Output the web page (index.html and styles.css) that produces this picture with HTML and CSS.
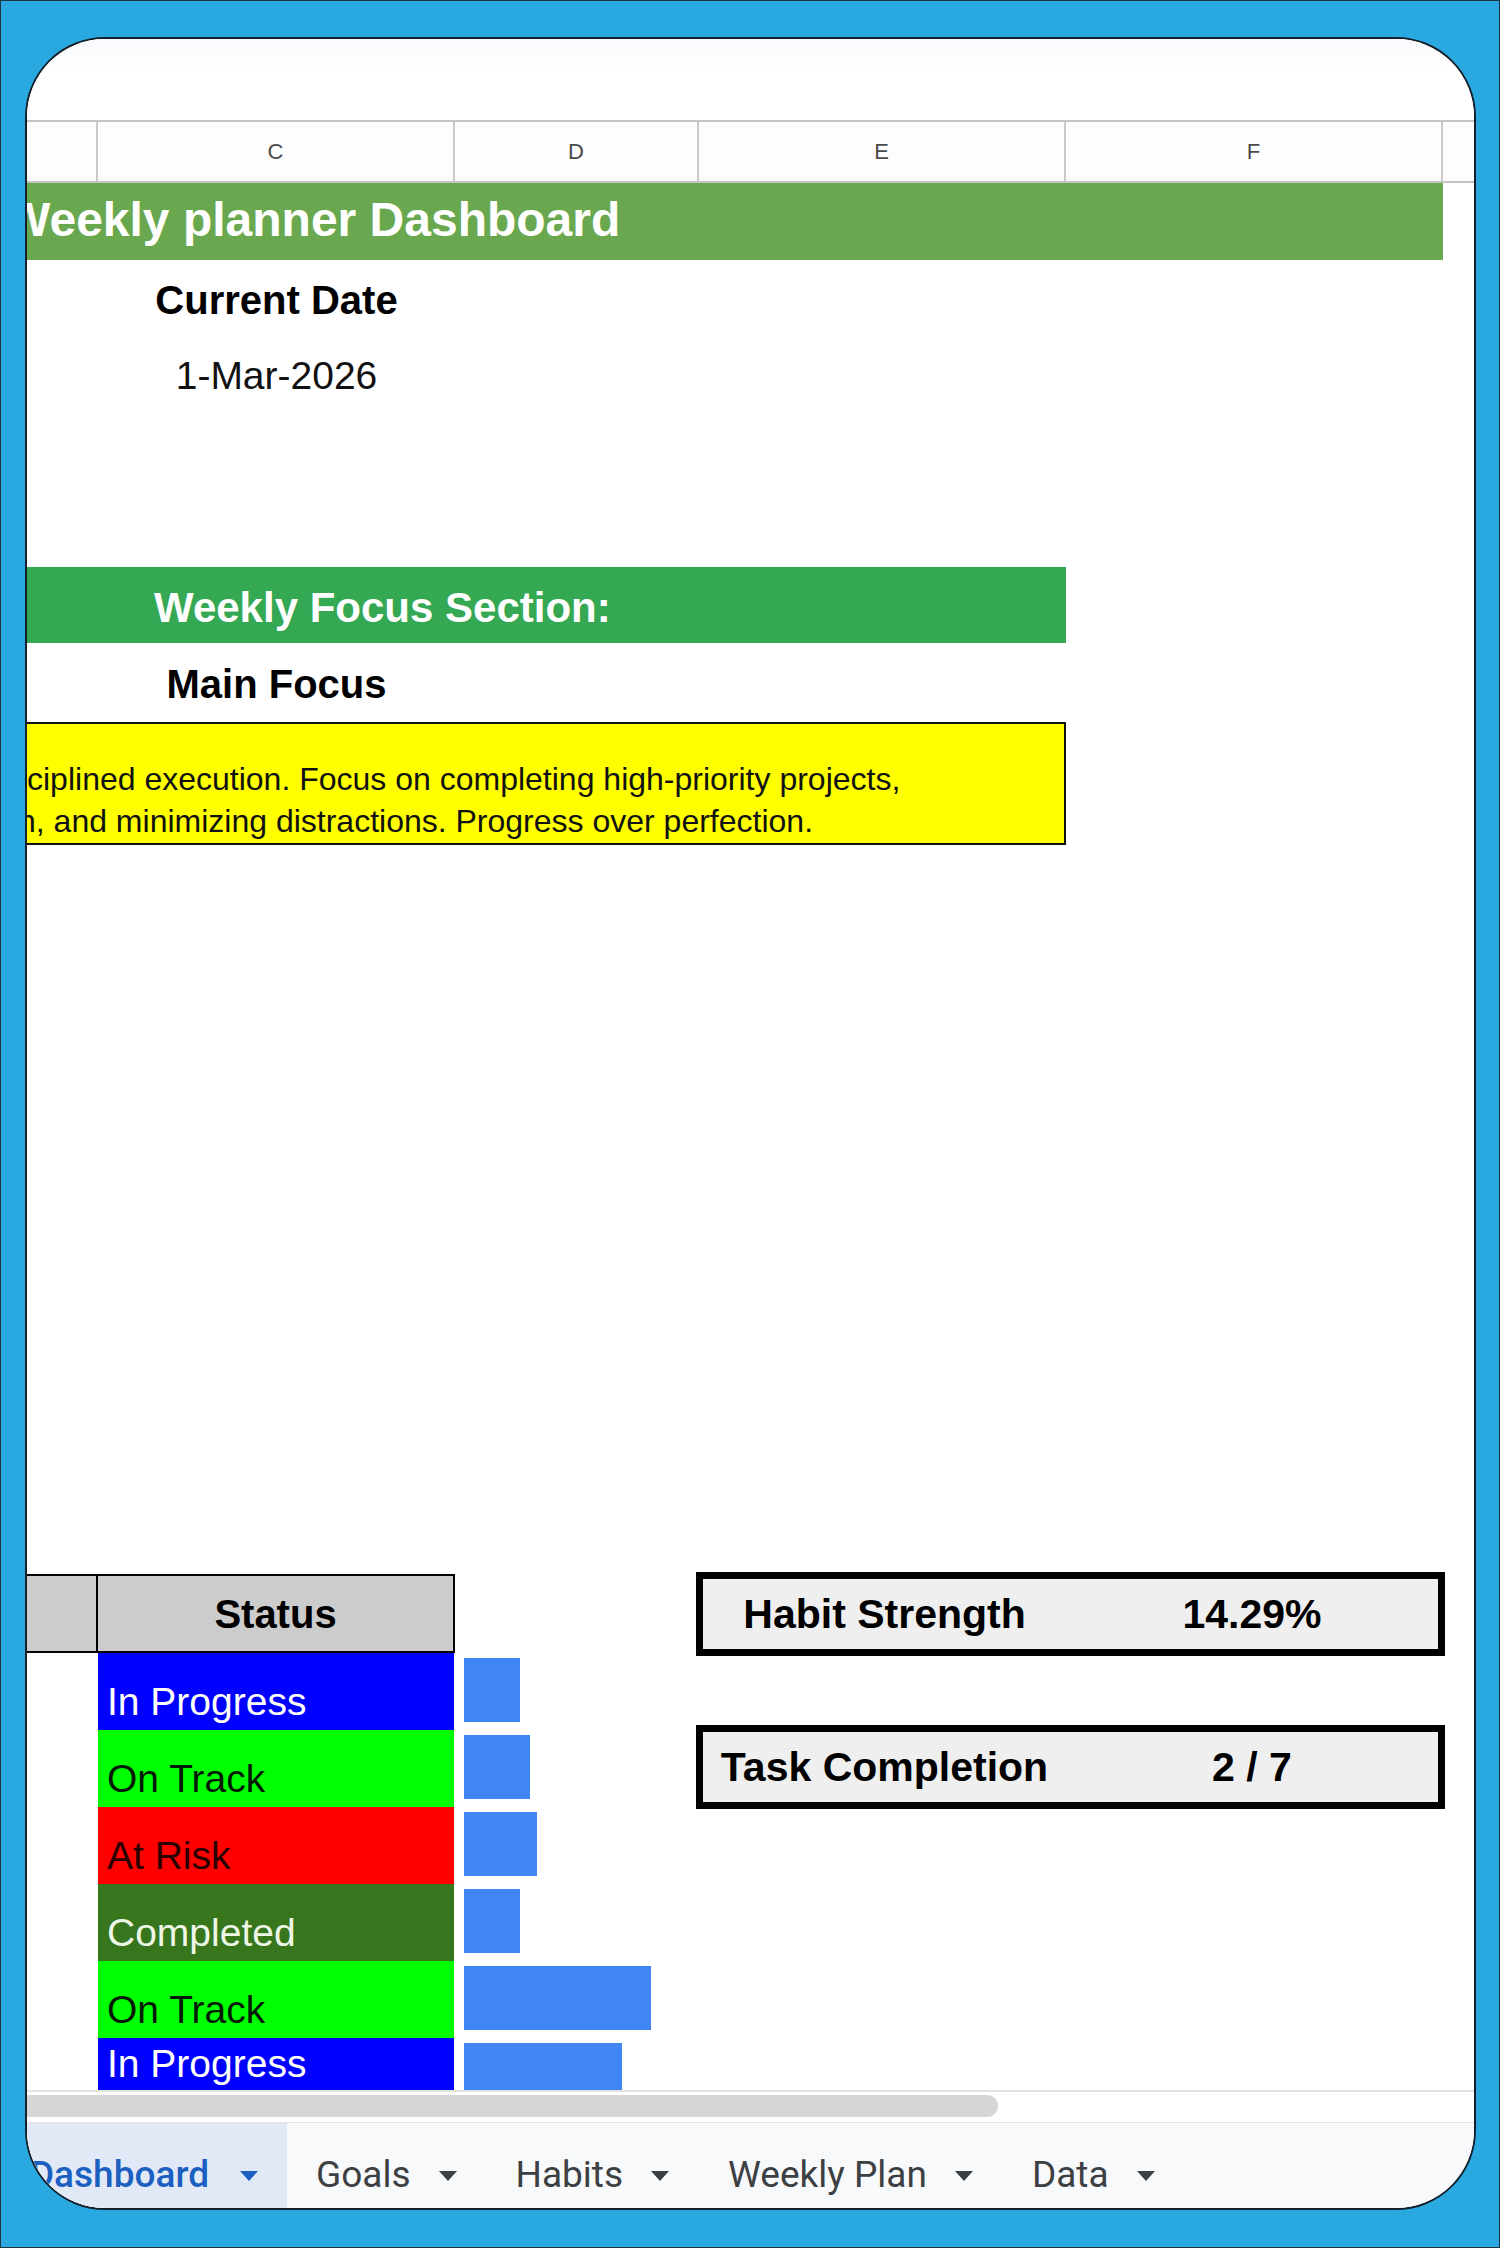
FILE: index.html
```html
<!DOCTYPE html>
<html lang="en">
<head>
<meta charset="utf-8">
<title>Weekly planner Dashboard</title>
<link rel="stylesheet" href="styles.css">
</head>
<body>
<div class="frame">
  <div class="card">
    <div class="top-space"></div>
    <div class="col-headers">
      <div class="ch"></div>
      <div class="ch">C</div>
      <div class="ch">D</div>
      <div class="ch">E</div>
      <div class="ch">F</div>
      <div class="ch last"></div>
    </div>
    <div class="sheet">
      <div class="row r-title">
        <div class="title-bar"><span class="title-text">Weekly planner Dashboard</span></div>
      </div>
      <div class="row r-std">
        <div class="cell-c bold">Current Date</div>
      </div>
      <div class="row r-std">
        <div class="cell-c">1-Mar-2026</div>
      </div>
      <div class="spacer-a"></div>
      <div class="row r-focus">
        <div class="focus-bar">Weekly Focus Section:</div>
      </div>
      <div class="row r-main">
        <div class="cell-c bold">Main Focus</div>
      </div>
      <div class="row r-yellow">
        <div class="yellow-box">
          <span class="yl">ciplined execution. Focus on completing high-priority projects,</span>
          <span class="yl yl2">n, and minimizing distractions. Progress over perfection.</span>
        </div>
      </div>
      <div class="spacer-b"></div>
      <div class="status-grid">
        <div class="st-head st-b"></div>
        <div class="st-head st-c">Status</div>
        <div class="metrics">
          <div class="metric">
            <span class="m-label">Habit Strength</span>
            <span class="m-value">14.29%</span>
          </div>
          <div class="metric">
            <span class="m-label">Task Completion</span>
            <span class="m-value">2 / 7</span>
          </div>
        </div>
        <div class="st-cell s-blue">In Progress</div>
        <div class="bar-cell"><span class="bar" style="width:56px"></span></div>
        <div class="st-cell s-green">On Track</div>
        <div class="bar-cell"><span class="bar" style="width:66px"></span></div>
        <div class="st-cell s-red">At Risk</div>
        <div class="bar-cell"><span class="bar" style="width:73px"></span></div>
        <div class="st-cell s-done">Completed</div>
        <div class="bar-cell"><span class="bar" style="width:56px"></span></div>
        <div class="st-cell s-green">On Track</div>
        <div class="bar-cell"><span class="bar" style="width:187px"></span></div>
        <div class="st-cell s-blue">In Progress</div>
        <div class="bar-cell"><span class="bar" style="width:158px"></span></div>
      </div>
    </div>
    <div class="scroll-area"><div class="thumb"></div></div>
    <div class="tabs">
      <div class="tab active"><span class="tab-text">Dashboard</span><span class="tri"></span></div>
      <div class="tab"><span class="tab-text">Goals</span><span class="tri"></span></div>
      <div class="tab"><span class="tab-text">Habits</span><span class="tri"></span></div>
      <div class="tab"><span class="tab-text">Weekly Plan</span><span class="tri"></span></div>
      <div class="tab"><span class="tab-text">Data</span><span class="tri"></span></div>
    </div>
  </div>
</div>
</body>
</html>
```
FILE: styles.css
```css
* { box-sizing: border-box; }

html, body {
  margin: 0;
  padding: 0;
}

body {
  width: 1500px;
  height: 2248px;
  background: #29a9e0;
  font-family: "Liberation Sans", Arial, sans-serif;
  color: #000;
}

.frame {
  width: 1500px;
  height: 2248px;
  border: 1px solid #1d3444;
  padding: 36px 0 0 24px;
}

.card {
  --cols: 71px 357px 244px 367px 377px 1fr;
  width: 1451px;
  height: 2173px;
  background: #ffffff;
  border: 2px solid #14202b;
  border-radius: 80px;
  overflow: hidden;
  display: flex;
  flex-direction: column;
}

.top-space {
  height: 81px;
  flex: none;
  background: linear-gradient(#f9fafd, #ffffff 30px);
}

/* column letters */
.col-headers {
  flex: none;
  height: 63px;
  display: grid;
  grid-template-columns: var(--cols);
  border-top: 2px solid #c4c4c4;
  border-bottom: 2px solid #c4c4c4;
  background: #fdfdfd;
}

.ch {
  border-right: 2px solid #cacaca;
  display: flex;
  align-items: center;
  justify-content: center;
  font-size: 22px;
  color: #4a4a4a;
}

.ch.last { border-right: none; }

/* sheet body */
.sheet {
  flex: none;
  height: 1907px;
  overflow: hidden;
  display: flex;
  flex-direction: column;
}

.row {
  flex: none;
  display: grid;
  grid-template-columns: var(--cols);
}

.r-title { height: 77px; }
.r-std { height: 77px; }
.r-focus { height: 76px; }
.r-main { height: 79px; }
.r-yellow { height: 123px; }

.spacer-a { flex: none; height: 153px; }
.spacer-b { flex: none; height: 729px; }

.title-bar {
  grid-column: 1 / 6;
  background: #6aa84f;
  display: flex;
  align-items: center;
  padding-bottom: 4px;
  white-space: nowrap;
}

.title-text {
  margin-left: -22px;
  font-size: 48px;
  font-weight: 700;
  color: #ffffff;
}

.cell-c {
  grid-column: 2;
  display: flex;
  align-items: center;
  justify-content: center;
  font-size: 39px;
  white-space: nowrap;
  color: #111;
}

.cell-c.bold {
  font-weight: 700;
  font-size: 40px;
  padding-top: 4px;
  color: #000;
}

.focus-bar {
  grid-column: 1 / 5;
  background: #34a853;
  color: #ffffff;
  font-size: 42px;
  font-weight: 700;
  display: flex;
  align-items: center;
  padding: 6px 0 0 127px;
  white-space: nowrap;
}

.yellow-box {
  grid-column: 1 / 5;
  background: #ffff00;
  border: 2px solid #111;
  border-left: none;
  display: flex;
  flex-direction: column;
  justify-content: flex-end;
  padding-bottom: 1px;
  font-size: 32px;
  line-height: 42px;
  white-space: nowrap;
  color: #111;
}

.yl { display: block; }
.yl2 { margin-left: -9px; }

/* status table */
.status-grid {
  flex: none;
  display: grid;
  grid-template-columns: var(--cols);
  grid-template-rows: 79px repeat(5, 77px) 54px;
}

.st-head {
  background: #cccccc;
  border-top: 2px solid #000;
  border-bottom: 2px solid #000;
  border-right: 2px solid #000;
}

.st-b { grid-column: 1; grid-row: 1; }

.st-c {
  grid-column: 2;
  grid-row: 1;
  display: flex;
  align-items: center;
  justify-content: center;
  font-size: 40px;
  font-weight: 700;
  padding-top: 2px;
}

.st-cell {
  grid-column: 2;
  display: flex;
  align-items: flex-end;
  padding: 0 0 9px 9px;
  font-size: 39px;
  line-height: 1;
  white-space: nowrap;
  margin-right: 1px;
}

.s-blue { background: #0000ff; color: #ffffff; }
.s-green { background: #00ff00; color: #051a05; }
.s-red { background: #ff0000; color: #2a0000; }
.s-done { background: #38761d; color: #eef7e6; }

.bar-cell {
  grid-column: 3;
  padding: 5px 0 0 9px;
}

.bar {
  display: block;
  height: 64px;
  background: #4285f4;
}

.metrics {
  grid-column: 4 / 6;
  grid-row: 1 / span 3;
  margin: -2px -2px 0 -3px;
  display: flex;
  flex-direction: column;
  gap: 69px;
  align-self: start;
}

.metric {
  height: 84px;
  border: 7px solid #000;
  background: #efefef;
  display: grid;
  grid-template-columns: 363px 1fr;
  align-items: center;
  font-size: 41px;
  font-weight: 700;
  white-space: nowrap;
}

.m-label, .m-value { text-align: center; }

/* horizontal scrollbar */
.scroll-area {
  flex: none;
  height: 33px;
  border-top: 2px solid #e3e3e3;
  border-bottom: 1px solid #e3e3e3;
  padding: 3px 0 5px 0;
  background: #ffffff;
}

.thumb {
  width: 971px;
  height: 22px;
  background: #d6d6d6;
  border-radius: 0 11px 11px 0;
}

/* sheet tabs */
.tabs {
  flex: 1;
  display: flex;
  background: #f8f9fb;
  font-family: Roboto, "Liberation Sans", sans-serif;
  font-size: 37px;
  color: #3c4043;
}

.tab {
  display: flex;
  align-items: center;
  gap: 28px;
  padding: 18px 30px 0 29px;
  white-space: nowrap;
}

.tab.active {
  width: 260px;
  flex: none;
  justify-content: flex-end;
  gap: 31px;
  padding-right: 29px;
  padding-left: 0;
  background: #e2e9f6;
  color: #1b5fc1;
  font-weight: 500;
}

.tri {
  width: 0;
  height: 0;
  border-left: 9px solid transparent;
  border-right: 9px solid transparent;
  border-top: 10px solid currentColor;
  margin-top: 2px;
}
```
